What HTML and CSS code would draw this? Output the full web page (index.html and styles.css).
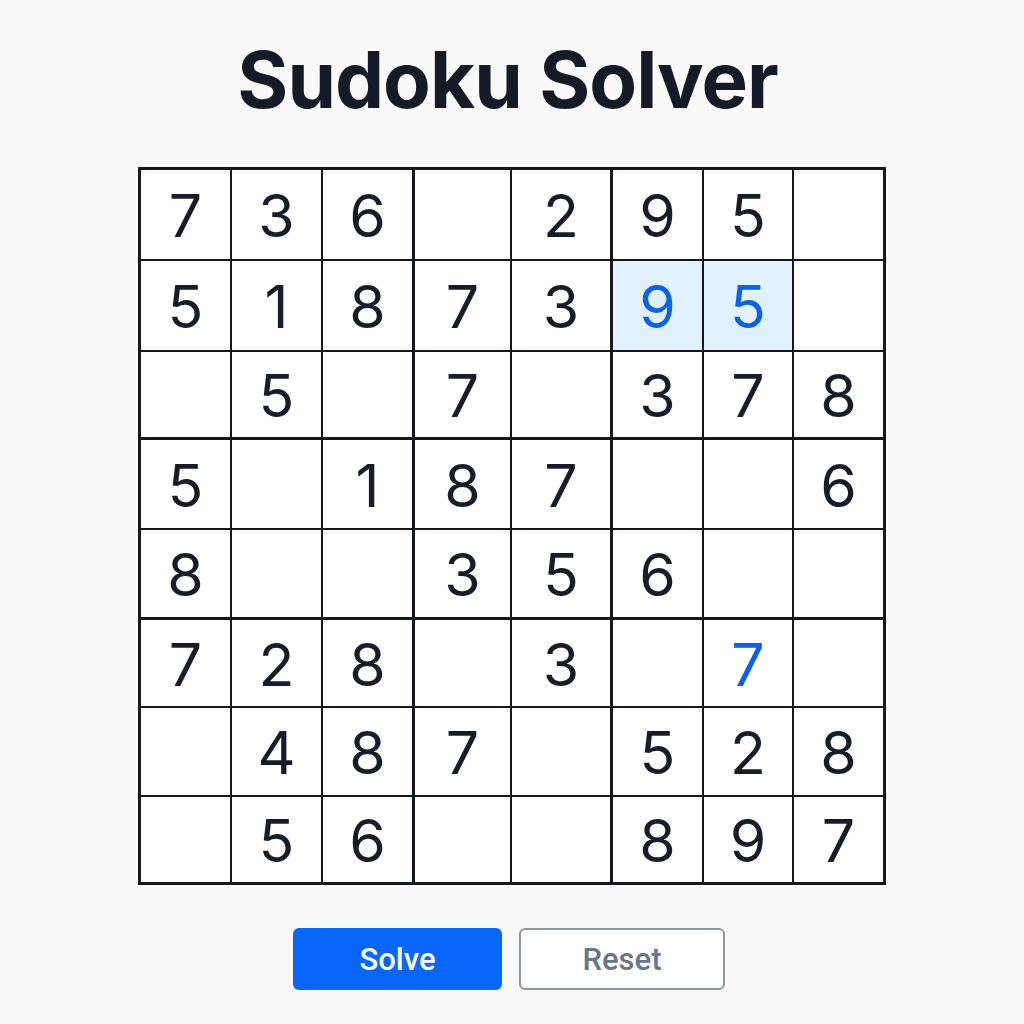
FILE: index.html
```html
<!DOCTYPE html>
<html lang="en">
<head>
<meta charset="utf-8">
<title>Sudoku Solver</title>
<link rel="stylesheet" href="styles.css">
</head>
<body>
<main class="app">
  <h1 class="title">Sudoku Solver</h1>
  <div class="board">
    <div class="cell">7</div><div class="cell">3</div><div class="cell">6</div><div class="cell"></div><div class="cell">2</div><div class="cell">9</div><div class="cell">5</div><div class="cell"></div>
    <div class="cell">5</div><div class="cell">1</div><div class="cell">8</div><div class="cell">7</div><div class="cell">3</div><div class="cell solved selected">9</div><div class="cell solved selected">5</div><div class="cell"></div>
    <div class="cell"></div><div class="cell">5</div><div class="cell"></div><div class="cell">7</div><div class="cell"></div><div class="cell">3</div><div class="cell">7</div><div class="cell">8</div>
    <div class="cell">5</div><div class="cell"></div><div class="cell">1</div><div class="cell">8</div><div class="cell">7</div><div class="cell"></div><div class="cell"></div><div class="cell">6</div>
    <div class="cell">8</div><div class="cell"></div><div class="cell"></div><div class="cell">3</div><div class="cell">5</div><div class="cell">6</div><div class="cell"></div><div class="cell"></div>
    <div class="cell">7</div><div class="cell">2</div><div class="cell">8</div><div class="cell"></div><div class="cell">3</div><div class="cell"></div><div class="cell solved">7</div><div class="cell"></div>
    <div class="cell"></div><div class="cell">4</div><div class="cell">8</div><div class="cell">7</div><div class="cell"></div><div class="cell">5</div><div class="cell">2</div><div class="cell">8</div>
    <div class="cell"></div><div class="cell">5</div><div class="cell">6</div><div class="cell"></div><div class="cell"></div><div class="cell">8</div><div class="cell">9</div><div class="cell">7</div>
  </div>
  <div class="actions">
    <button class="btn btn-primary">Solve</button>
    <button class="btn btn-secondary">Reset</button>
  </div>
</main>
</body>
</html>
```
FILE: styles.css
```css
html, body {
  margin: 0;
  padding: 0;
  background: #fafafa;
}
body {
  font-family: Inter, "Noto Sans", sans-serif;
  color: #161c26;
}
.app {
  display: flex;
  flex-direction: column;
  align-items: center;
  padding-top: 41px;
}
.title {
  margin: 0 9px 0 0;
  font-size: 78px;
  line-height: 78px;
  font-weight: 700;
  letter-spacing: -1px;
  color: #141b26;
}
.board {
  margin-top: 48px;
  display: grid;
  grid-template-columns: 91px 91px 92px 97px 101px 91px 90px 89px;
  grid-template-rows: 91px 91px 88px 90px 90px 88px 89px 85px;
  border: 3px solid #14181e;
  background: #ffffff;
}
.cell {
  box-sizing: border-box;
  display: flex;
  align-items: center;
  justify-content: center;
  border-right: 2px solid #14181e;
  border-bottom: 2px solid #14181e;
  font-size: 59px;
  line-height: 1;
  font-weight: 400;
  color: #171d28;
  padding-top: 2px;
}
.cell:nth-child(8n+3),
.cell:nth-child(8n+5) {
  border-right-width: 3px;
}
.cell:nth-child(8n) {
  border-right: none;
}
.cell:nth-child(n+17):nth-child(-n+24),
.cell:nth-child(n+33):nth-child(-n+40) {
  border-bottom-width: 3px;
}
.cell:nth-child(n+57) {
  border-bottom: none;
}
.cell.solved {
  color: #0b62e6;
}
.cell.selected {
  background: #e2f1fe;
}
.actions {
  margin: 43px 6px 0 0;
  display: flex;
  gap: 17px;
}
.btn {
  box-sizing: border-box;
  width: 209px;
  height: 62px;
  border-radius: 6px;
  font-family: Roboto, "Noto Sans", sans-serif;
  font-size: 31px;
  font-weight: 500;
  cursor: pointer;
}
.btn-primary {
  background: #0866fb;
  color: #ffffff;
  border: none;
}
.btn-secondary {
  width: 206px;
  background: #ffffff;
  color: #66778a;
  border: 2px solid #8c97a3;
}
```
